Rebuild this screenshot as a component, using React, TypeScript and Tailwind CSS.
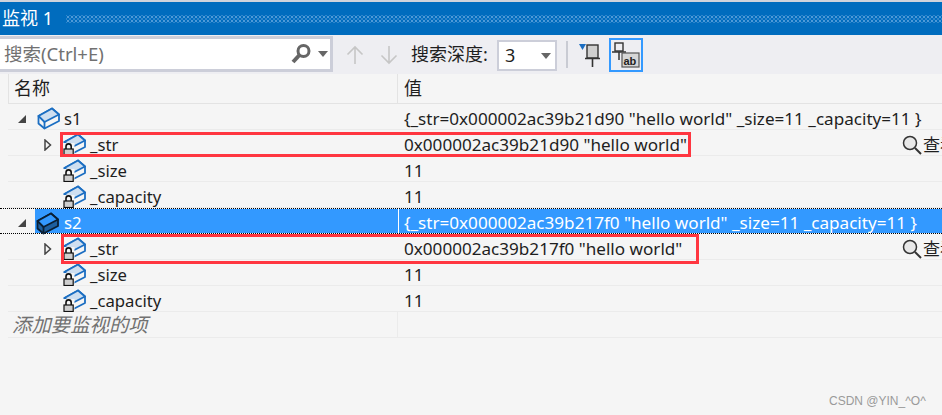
import React from "react";

const FONT = "[font-family:'Noto_Sans','Noto_Sans_CJK_SC',sans-serif]";

function Cube({ dark = false, lock = false }: { dark?: boolean; lock?: boolean }) {
  const stroke = dark ? "#0a1f33" : "#1b6ec2";
  const top = dark ? "#3399ff" : "#cfdff0";
  const side = dark ? "#1d5f9f" : "#f5f5f5";
  return (
    <svg width="23" height="23" viewBox="0 0 23 23" className="shrink-0 block">
      <path d="M1.5 9 L15 1.5 L22 7.5 L22 14 L7.5 21.5 L1.5 16.5 Z" fill={side} stroke={stroke} strokeWidth="1.8" strokeLinejoin="round" />
      <path d="M1.5 9 L15 1.5 L22 7.5 L7.5 15 Z" fill={top} stroke={stroke} strokeWidth="1.8" strokeLinejoin="round" />
      <path d="M7.5 15 L7.5 21.5" stroke={stroke} strokeWidth="1.8" />
      {lock && (
        <g>
          <rect x="0" y="10" width="11.5" height="13" fill="#f5f5f5" />
          <path d="M3 16 V13.5 A2.6 2.6 0 0 1 8.2 13.5 V16" fill="none" stroke="#111" strokeWidth="1.6" />
          <rect x="1" y="16" width="9.2" height="6.5" fill="#cfcfcf" stroke="#111" strokeWidth="1.2" />
        </g>
      )}
    </svg>
  );
}

function Expanded() {
  return (
    <svg width="10" height="10" viewBox="0 0 10 10" className="block">
      <path d="M9 1 V9 H1 Z" fill="#444" />
    </svg>
  );
}

function Collapsed() {
  return (
    <svg width="8" height="12" viewBox="0 0 8 12" className="block">
      <path d="M1 1 L6.5 6 L1 11 Z" fill="#f5f5f5" stroke="#444" strokeWidth="1.5" />
    </svg>
  );
}

function Magnifier() {
  return (
    <svg width="20" height="20" viewBox="0 0 20 20" className="block shrink-0">
      <circle cx="8" cy="8" r="6.5" fill="#e8e8e8" stroke="#333" strokeWidth="1.5" />
      <path d="M13 13 L19 19" stroke="#333" strokeWidth="2" />
    </svg>
  );
}

type RowProps = {
  level: 0 | 1;
  name: string;
  value: string;
  expander?: boolean;
  view?: boolean;
  selected?: boolean;
};

function Row({ level, name, value, expander, view, selected }: RowProps) {
  if (selected) {
    return (
      <div className="flex h-[26px] border-y border-dotted border-black">
        <div className="w-[35px] flex items-center pl-[17px] pt-[4px] shrink-0">
          <Expanded />
        </div>
        <div className="w-[363px] flex items-center bg-[#3399ff] text-white text-[16.7px] pt-[4px] shrink-0">
          <div className="ml-[1px] w-[28px] shrink-0">
            <Cube dark />
          </div>
          <span>{name}</span>
        </div>
        <div className="flex-1 flex items-center bg-[#3399ff] text-white border-l border-white pl-[5px] pt-[4px] whitespace-nowrap overflow-hidden">
          {value}
        </div>
      </div>
    );
  }
  return (
    <div className="flex h-[26px] ml-[8px] border-b border-[#ebebeb]">
      <div className="w-[390px] flex items-center text-[16.7px] pt-[4px] shrink-0">
        {level === 0 ? (
          <>
            <div className="w-[29px] pl-[9px] shrink-0">
              <Expanded />
            </div>
            <div className="w-[27px] shrink-0">
              <Cube />
            </div>
          </>
        ) : (
          <>
            <div className="w-[55px] pl-[36px] shrink-0">{expander && <Collapsed />}</div>
            <div className="w-[27px] shrink-0">
              <Cube lock />
            </div>
          </>
        )}
        <span>{name}</span>
      </div>
      <div className="flex-1 flex items-center pl-[6px] pt-[4px] whitespace-nowrap overflow-hidden">
        <span className="flex-1">{value}</span>
        {view && (
          <div className="flex items-center gap-[1px] w-[40px] shrink-0">
            <Magnifier />
            <span>查看</span>
          </div>
        )}
      </div>
    </div>
  );
}

export default function App() {
  return (
    <div className={`relative w-[942px] h-[415px] overflow-hidden bg-[#f5f5f5] text-[#1e1e1e] text-[17.1px] ${FONT}`}>
      <div className="h-[2px] bg-[#cfd3dc]" />
      <div className="h-[33px] bg-[#006cbe] flex items-center pl-[2px] text-white text-[18px] gap-[13px]">
        <span className="whitespace-nowrap">监视 1</span>
        <div className="flex-1 h-[8px] bg-[radial-gradient(#4e9ad8_1px,transparent_1.2px),radial-gradient(#2f86cc_1px,transparent_1.2px)] bg-[length:4px_4px] bg-[position:0_0,2px_2px]" />
      </div>

      <div className="h-[39px] bg-[#eeeef2] flex items-center">
        <div className="w-[333px] h-[36px] bg-white border-y-[3px] border-r-[3px] border-[#ccced9] flex items-center pl-[4px] shrink-0 -mt-[1px]">
          <span className="text-[#717171] text-[18.5px] flex-1">搜索(Ctrl+E)</span>
          <svg width="22" height="22" viewBox="0 0 22 22" className="mr-[6px]">
            <circle cx="13.5" cy="8" r="5.5" fill="none" stroke="#666" strokeWidth="3" />
            <path d="M9.5 12 L3 19" stroke="#666" strokeWidth="4" />
          </svg>
          <svg width="10" height="6" viewBox="0 0 10 6" className="mr-[2px]">
            <path d="M0 0 H10 L5 6 Z" fill="#666" />
          </svg>
        </div>
        <svg width="18" height="20" viewBox="0 0 18 20" className="ml-[13px] shrink-0">
          <path d="M9 19 V2 M1.5 9.5 L9 2 L16.5 9.5" fill="none" stroke="#c6c6c6" strokeWidth="1.6" />
        </svg>
        <svg width="18" height="20" viewBox="0 0 18 20" className="ml-[16px] shrink-0">
          <path d="M9 1 V18 M1.5 10.5 L9 18 L16.5 10.5" fill="none" stroke="#c6c6c6" strokeWidth="1.6" />
        </svg>
        <span className="ml-[13px] w-[86px] whitespace-nowrap text-[18px] shrink-0">搜索深度:</span>
        <div className="w-[60px] h-[31px] mt-[2px] bg-white border-2 border-[#ccced9] flex items-center pl-[6px] text-[18px] shrink-0">
          <span className="flex-1">3</span>
          <svg width="10" height="6" viewBox="0 0 10 6" className="mr-[4px]">
            <path d="M0 0 H10 L5 6 Z" fill="#666" />
          </svg>
        </div>
        <div className="ml-[9px] w-[2px] h-[27px] bg-[#c9cbd3] shrink-0" />
        <svg width="22" height="24" viewBox="0 0 22 24" className="ml-[11px] shrink-0">
          <path d="M0 1 H7 L3.5 7 Z" fill="#1b6ec2" />
          <rect x="8" y="2" width="11" height="13" fill="#cfcfcf" stroke="#333" strokeWidth="1.4" />
          <path d="M6 15.5 H21 M13.5 15.5 V24" stroke="#333" strokeWidth="1.6" />
        </svg>
        <div className="ml-[8px] w-[34px] h-[34px] mt-[1px] border-2 border-[#3399ff] flex items-center justify-center shrink-0">
          <svg width="28" height="26" viewBox="0 0 28 26">
            <rect x="3" y="1" width="8" height="8" fill="none" stroke="#333" strokeWidth="1.4" />
            <path d="M0 10 H14 M7 10 V18" stroke="#333" strokeWidth="1.5" />
            <rect x="10" y="11" width="17" height="14" fill="#d6d6d6" stroke="#555" strokeWidth="1.2" />
            <text x="11.5" y="22.5" fontSize="11" fontWeight="700" fill="#222" fontFamily="'Liberation Sans',sans-serif">ab</text>
          </svg>
        </div>
      </div>

      <div className="flex h-[30px] ml-[8px] border-b border-[#e3e3e3] border-l border-l-[#e3e3e3] text-[18px]">
        <div className="w-[389px] flex items-center pl-[5px] border-r border-[#e3e3e3] shrink-0">名称</div>
        <div className="flex-1 flex items-center pl-[6px]">值</div>
      </div>

      <Row level={0} name="s1" value={'{_str=0x000002ac39b21d90 "hello world" _size=11 _capacity=11 }'} />
      <Row level={1} name="_str" value={'0x000002ac39b21d90 "hello world"'} expander view />
      <Row level={1} name="_size" value="11" />
      <Row level={1} name="_capacity" value="11" />
      <Row level={0} selected name="s2" value={'{_str=0x000002ac39b217f0 "hello world" _size=11 _capacity=11 }'} />
      <Row level={1} name="_str" value={'0x000002ac39b217f0 "hello world"'} expander view />
      <Row level={1} name="_size" value="11" />
      <Row level={1} name="_capacity" value="11" />

      <div className="flex h-[26px] ml-[8px] border-b border-[#ebebeb]">
        <div className="w-[390px] flex items-center pl-[4px] italic text-[19.4px] text-[#717171] border-r border-[#ebebeb] shrink-0">
          添加要监视的项
        </div>
      </div>

      <div className="absolute left-[60px] top-[132px] w-[631px] h-[25px] border-[3px] border-[#ff3640]" />
      <div className="absolute left-[61px] top-[234px] w-[638px] h-[30px] border-[3px] border-[#ff3640]" />

      <div className="absolute left-[829px] top-[392px] text-[12px] text-[#9a9a9a] [font-family:'Liberation_Sans',sans-serif]">
        CSDN @YIN_^O^
      </div>
    </div>
  );
}
